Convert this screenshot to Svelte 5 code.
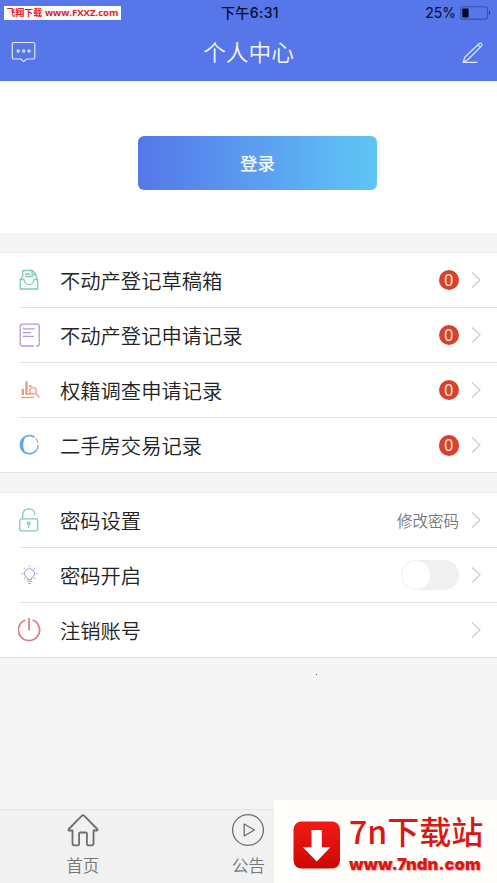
<script>
    const records = [
        { icon: 'draft', name: '不动产登记草稿箱', count: 0 },
        { icon: 'form', name: '不动产登记申请记录', count: 0 },
        { icon: 'survey', name: '权籍调查申请记录', count: 0 },
        { icon: 'trade', name: '二手房交易记录', count: 0 }
    ];

    const settings = [
        { icon: 'lock', name: '密码设置', hint: '修改密码' },
        { icon: 'bulb', name: '密码开启', toggle: true },
        { icon: 'power', name: '注销账号' }
    ];

    let passwordOn = $state(false);
</script>

{#snippet rowIcon(name)}
    <svg class="row-icon {name}" viewBox="0 0 24 26" width="24" height="26">
        {#if name === 'draft'}
            <path d="M4.8 10V3.5h9.4l3.6 3.6V10M14 3.5v4h3.8M7 7h5M7 9.5h8" />
            <path d="M4.5 9.8 2.2 12.5v9.5h17.4v-9.5L18 9.8M2.2 12.5h3.8c.6 3.2 2.5 5.2 5 5.2s4.4-2 5-5.2h3.6" />
        {:else if name === 'form'}
            <path d="M16 24H4.2a2 2 0 0 1-2-2V4.2a2 2 0 0 1 2-2h15a2 2 0 0 1 2 2V22q0 2-2 2h-1" />
            <path d="M5 6.8h11.5M5 10.6h8M5 14.4h11" />
        {:else if name === 'survey'}
            <path class="bars" d="M4.8 18V12M8.5 18V4.5M12.2 10V8M11.5 18v-2" />
            <path d="M3 20.5h13" />
            <circle cx="15" cy="13.8" r="3.2" />
            <path d="m17.4 16.2 4 4.3" />
        {:else if name === 'trade'}
            <path class="arc" d="M16.5 5.2A9 9 0 1 0 18.5 18.2" />
            <path class="fill" d="M9 3.6A9.7 9.7 0 0 0 9 22.4C4 18.5 4 7.5 9 3.6" />
            <path class="orange" d="M17.6 6.3a9 9 0 0 1 2.3 4.7" />
            <path d="M20 13a9 9 0 0 1-1.5 5.2" />
        {:else if name === 'lock'}
            <rect x="1.7" y="11.9" width="18" height="12" rx="1.8" />
            <path d="M4.7 11.8V8c0-8.4 12.3-8 12.3.3" />
            <circle cx="10.7" cy="16.2" r="1.4" />
            <path d="M10.7 17.6v3" />
        {:else if name === 'bulb'}
            <path d="M9.5 17.6v-1.3a5 5 0 1 1 4 0v1.3zM9.3 19.5h4.5M10 21.5h3" />
            <path d="M11.5 3.5v1.6M5.8 5.7l1 1.1M17.2 5.7l-1 1.1M3.5 11.5h1.6M18 11.5h1.6M5.8 17l1-1M17.2 17l-1-1" />
        {:else}
            <path d="M7.4 3a10.6 10.6 0 1 0 7.2 0" />
            <path d="M11 1v12.4" />
        {/if}
    </svg>
{/snippet}

{#snippet chevron()}
    <svg class="chevron" viewBox="0 0 10 18" width="10" height="18">
        <path d="m1 1.5 8 7.5-8 7.5" />
    </svg>
{/snippet}

<div class="app">
    <header>
        <div class="status">
            <span class="stamp"><b class="site">飞翔下载</b> <b class="url">www.FXXZ.com</b></span>
            <span class="time">下午6:31</span>
            <span class="battery">
                25%
                <svg viewBox="0 0 32 14" width="32" height="14">
                    <rect class="shell" x=".7" y=".7" width="26.8" height="12.4" rx="2.4" />
                    <rect x="2.3" y="2.4" width="6.3" height="9" rx=".8" />
                    <path d="M29 4.8q1.8 2.1 0 4.2z" />
                </svg>
            </span>
        </div>
        <div class="nav">
            <svg class="nav-icon" viewBox="0 0 25 22" width="25" height="22">
                <path d="M2.5 1.5h20q1.3 0 1.3 1.3v14q0 1.2-1.3 1.2h-6.8l-3 2.6-3-2.6H2.5q-1.2 0-1.2-1.2v-14q0-1.3 1.2-1.3z" />
                <circle cx="7.2" cy="10" r="1.1" />
                <circle cx="12.6" cy="10" r="1.1" />
                <circle cx="18" cy="10" r="1.1" />
            </svg>
            <h1>个人中心</h1>
            <svg class="nav-icon" viewBox="0 0 24 24" width="24" height="24">
                <path d="M2 22.4 4 17 18.3 3.5q1-.9 2.1.1 1.3 1.2.3 2.3L7 19.5l-5 2.9h14.5M17 4.8l2.5 2.5" />
            </svg>
        </div>
    </header>

    <div class="login">
        <button class="login-btn">登录</button>
    </div>

    <section>
        {#each records as item}
            <div class="row">
                {@render rowIcon(item.icon)}
                <span class="name">{item.name}</span>
                <span class="badge">{item.count}</span>
                {@render chevron()}
            </div>
        {/each}
    </section>

    <section>
        {#each settings as item}
            <div class="row">
                {@render rowIcon(item.icon)}
                <span class="name">{item.name}</span>
                {#if item.hint}
                    <span class="hint">{item.hint}</span>
                {/if}
                {#if item.toggle}
                    <button
                        class="switch"
                        class:on={passwordOn}
                        aria-label={item.name}
                        onclick={() => (passwordOn = !passwordOn)}
                    ></button>
                {/if}
                {@render chevron()}
            </div>
        {/each}
    </section>

    <div class="blank"><i class="speck"></i></div>

    <footer>
        <div class="tab">
            <svg viewBox="0 0 34 34" width="34" height="34">
                <path d="M6.5 17.5H3.2q-1.4-.3-.4-1.5L15.7 2.8q1.3-1.2 2.6 0L31.2 16q1 1.2-.4 1.5h-3.3v13q0 1.9-1.9 1.9h-3.3q-1.4 0-1.4-1.4V20.7q0-1.2-1.2-1.2h-5.4q-1.2 0-1.2 1.2V31q0 1.4-1.4 1.4H8.4q-1.9 0-1.9-1.9z" />
            </svg>
            <span>首页</span>
        </div>
        <div class="tab notice">
            <svg viewBox="0 0 34 34" width="34" height="34">
                <circle cx="17" cy="17" r="15.4" />
                <path d="M13.2 11v12l10.2-6z" />
            </svg>
            <span>公告</span>
        </div>
        <div class="promo">
            <svg viewBox="0 0 48 48" width="48" height="48">
                <defs>
                    <linearGradient id="red" x1="0" y1="0" x2="0" y2="1">
                        <stop offset="0" stop-color="#f21a14" />
                        <stop offset="1" stop-color="#cb0905" />
                    </linearGradient>
                </defs>
                <rect x=".5" y=".5" width="46.5" height="47" rx="8" fill="url(#red)" />
                <path d="M18.5 9h10.3v17.2h8.6L23.7 40.5 10 26.2h8.5z" fill="#fff" />
            </svg>
            <div class="promo-text">
                <span class="promo-name">7n下载站</span>
                <span class="promo-url">www.7ndn.com</span>
            </div>
        </div>
    </footer>
</div>

<style>
:global(body) {
    margin: 0;
    background: #f5f5f5;
}

.app {
    display: flex;
    flex-direction: column;
    height: 883px;
    overflow: hidden;
    font-family: "Noto Sans CJK SC", sans-serif;
    color: #222;
}

svg {
    display: block;
    flex: none;
    fill: none;
    stroke-linejoin: round;
}

header {
    flex: none;
    height: 80.5px;
    background: #5676e9;
}

.status {
    display: grid;
    grid-template-columns: 1fr auto 1fr;
    align-items: center;
    height: 25px;
    padding: 0 5px 0 4px;
    color: #080d28;
    font-size: 14px;
}

.stamp {
    display: flex;
    align-items: center;
    justify-content: center;
    gap: 3px;
    width: 117px;
    height: 14px;
    background: #fff;
    color: #e01818;
    line-height: 14px;
    white-space: nowrap;
}

.site {
    font-size: 8.8px;
}

.url {
    font: bold 9.5px/14px "Open Sans", sans-serif;
}

.time {
    margin-left: 4px;
    font-family: Inter, "Noto Sans CJK SC", sans-serif;
    font-weight: 500;
    line-height: 20px;
    letter-spacing: .4px;
}

.battery {
    display: flex;
    align-items: center;
    justify-content: flex-end;
    gap: 4px;
    font-family: Inter, sans-serif;
}

.battery svg {
    fill: #050a20;
}

.battery .shell {
    fill: none;
    stroke: #3a51ab;
    stroke-width: 1.1;
}

.nav {
    display: flex;
    align-items: center;
    justify-content: space-between;
    height: 54px;
    padding: 0 12px 0 11px;
}

.nav-icon {
    stroke: #dfe8ff;
    stroke-width: 1.2;
}

h1 {
    margin: 0;
    padding-bottom: 1px;
    color: #f4f8ff;
    font-size: 22.7px;
    font-weight: 350;
    line-height: 30px;
}

.login {
    flex: none;
    height: 152.5px;
    padding-left: 138px;
    box-sizing: border-box;
    padding-top: 55px;
    background: #fff;
}

.login-btn {
    display: block;
    width: 239px;
    height: 54px;
    padding: 0;
    border: 0;
    border-radius: 6px;
    background: linear-gradient(90deg, #5676e9, #5fc6f6);
    color: #f4faff;
    font: 500 17.5px "Noto Sans CJK SC", sans-serif;
}

section {
    flex: none;
    margin-top: 20px;
    background: #fff;
    box-shadow: 0 -1px #e8e8e8;
}

section + section {
    margin-top: 19.7px;
}

.row {
    display: flex;
    align-items: center;
    height: 54.1px;
    margin-left: 19px;
    padding-right: 16px;
    border-bottom: 1px solid #e2e2e2;
}

.row:last-child {
    margin-left: 0;
    padding-left: 19px;
}

.name {
    flex: 1;
    margin-left: 18px;
    font-size: 20.3px;
    font-weight: 350;
    line-height: 30px;
}

.row-icon {
    margin-left: -1px;
    stroke: #7dccac;
    stroke-width: 1.3;
}

.row-icon.form {
    stroke: #b796d6;
}

.row-icon.survey {
    stroke: #e79b7b;
}

.bars {
    stroke-width: 2.4;
}

.row-icon.trade {
    stroke: #5baee3;
}

.arc {
    stroke-width: 1.7;
}

.fill {
    fill: #5baee3;
    stroke: none;
}

.orange {
    stroke: #e8a55c;
}

.row-icon.bulb {
    stroke: #a5acde;
    stroke-width: 1.1;
}

.row-icon.power {
    stroke: #d98389;
    stroke-width: 1.8;
}

.badge {
    width: 20.5px;
    height: 20.5px;
    border-radius: 50%;
    background: #d6432d;
    color: #ffe3d5;
    font: 16px/21px "Liberation Sans", sans-serif;
    text-align: center;
}

.chevron {
    margin-left: 12px;
    stroke: #c9c9cc;
    stroke-width: 1.1;
}

.hint {
    color: #777;
    font-size: 15.5px;
    font-weight: 350;
    line-height: 24px;
}

.switch {
    width: 58px;
    height: 30px;
    padding: 1px;
    border: 0;
    border-radius: 15px;
    background: #f0f0f0;
}

.switch::before {
    content: "";
    display: block;
    width: 28px;
    height: 28px;
    border-radius: 50%;
    background: #fff;
}

.switch.on {
    background: #5676e9;
}

.switch.on::before {
    margin-left: 28px;
}

.blank {
    flex: 1;
}

.speck {
    display: block;
    width: 1px;
    height: 1px;
    margin: 16px 0 0 316px;
    background: #644;
}

footer {
    position: relative;
    display: grid;
    grid-template-columns: repeat(3, 1fr);
    flex: none;
    height: 73px;
    border-top: 1px solid #e5e5e5;
    background: #f1f1f1;
}

.tab {
    display: flex;
    flex-direction: column;
    align-items: center;
    padding-top: 3px;
    color: #777;
    font-size: 16.5px;
    font-weight: 350;
    line-height: 24px;
}

.tab span {
    margin-top: 6px;
}

.tab svg {
    stroke: #6d6d6d;
    stroke-width: 1.8;
}

.notice svg {
    stroke-width: 1.3;
}

/* download banner covers the last tab */
.promo {
    position: absolute;
    right: 0;
    bottom: 0;
    display: flex;
    align-items: flex-start;
    gap: 8px;
    box-sizing: border-box;
    width: 223px;
    height: 83px;
    padding: 21px 0 0 19px;
    background: #fffefa;
}

.promo-text {
    display: flex;
    flex-direction: column;
    margin-top: -14px;
    color: #d91717;
    white-space: nowrap;
}

.promo-name {
    font-size: 32px;
    font-weight: 500;
    line-height: 47px;
}

.promo-url {
    font: 900 16.6px/20px Inter, sans-serif;
    text-shadow: 1px 1px 1px #e9a9a9;
}
</style>
